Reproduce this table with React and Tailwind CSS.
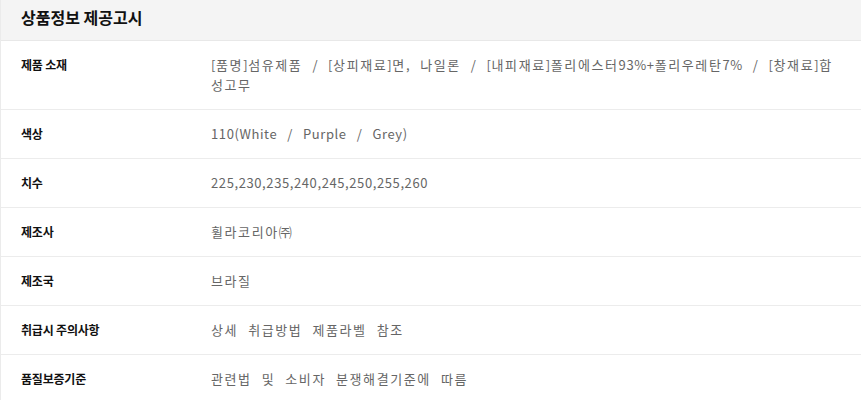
import React from "react";

const rows = [
  {
    label: "제품 소재",
    value:
      "[품명]섬유제품 / [상피재료]면, 나일론 / [내피재료]폴리에스터93%+폴리우레탄7% / [창재료]합성고무",
  },
  { label: "색상", value: "110(White / Purple / Grey)" },
  { label: "치수", value: "225,230,235,240,245,250,255,260" },
  { label: "제조사", value: "휠라코리아㈜" },
  { label: "제조국", value: "브라질" },
  { label: "취급시 주의사항", value: "상세 취급방법 제품라벨 참조" },
  { label: "품질보증기준", value: "관련법 및 소비자 분쟁해결기준에 따름" },
];

function Value({ text }) {
  const parts = text.split(/([가-힣㈜]+)/);
  return parts.map((p, i) =>
    /[가-힣㈜]/.test(p) ? (
      <span key={i} className="tracking-[1.6px]">
        {p}
      </span>
    ) : (
      <span key={i} className="tracking-[0.6px]">
        {p}
      </span>
    )
  );
}

export default function App() {
  return (
    <div
      className="w-[861px] h-[400px] overflow-hidden bg-white border-l border-[#ebebeb]"
      style={{ fontFamily: '"Noto Sans CJK KR", "Noto Sans", sans-serif' }}
    >
      <div className="h-[41px] bg-[#f4f4f4] border-b border-[#e8e8e8] pl-5 pt-[6px]">
        <h2 className="text-[16px] leading-[22px] font-bold text-[#111]">상품정보 제공고시</h2>
      </div>
      {rows.map((r) => (
        <div key={r.label} className="flex border-b border-[#ececec]">
          <div className="w-[210px] shrink-0 pl-5 py-[14px] text-[12px] leading-5 font-bold text-[#111] tracking-[-0.2px]">
            {r.label}
          </div>
          <div className="flex-1 pr-5 py-[14px] text-[13px] leading-5 text-[#666] [word-spacing:6.5px]">
            <Value text={r.value} />
          </div>
        </div>
      ))}
    </div>
  );
}
